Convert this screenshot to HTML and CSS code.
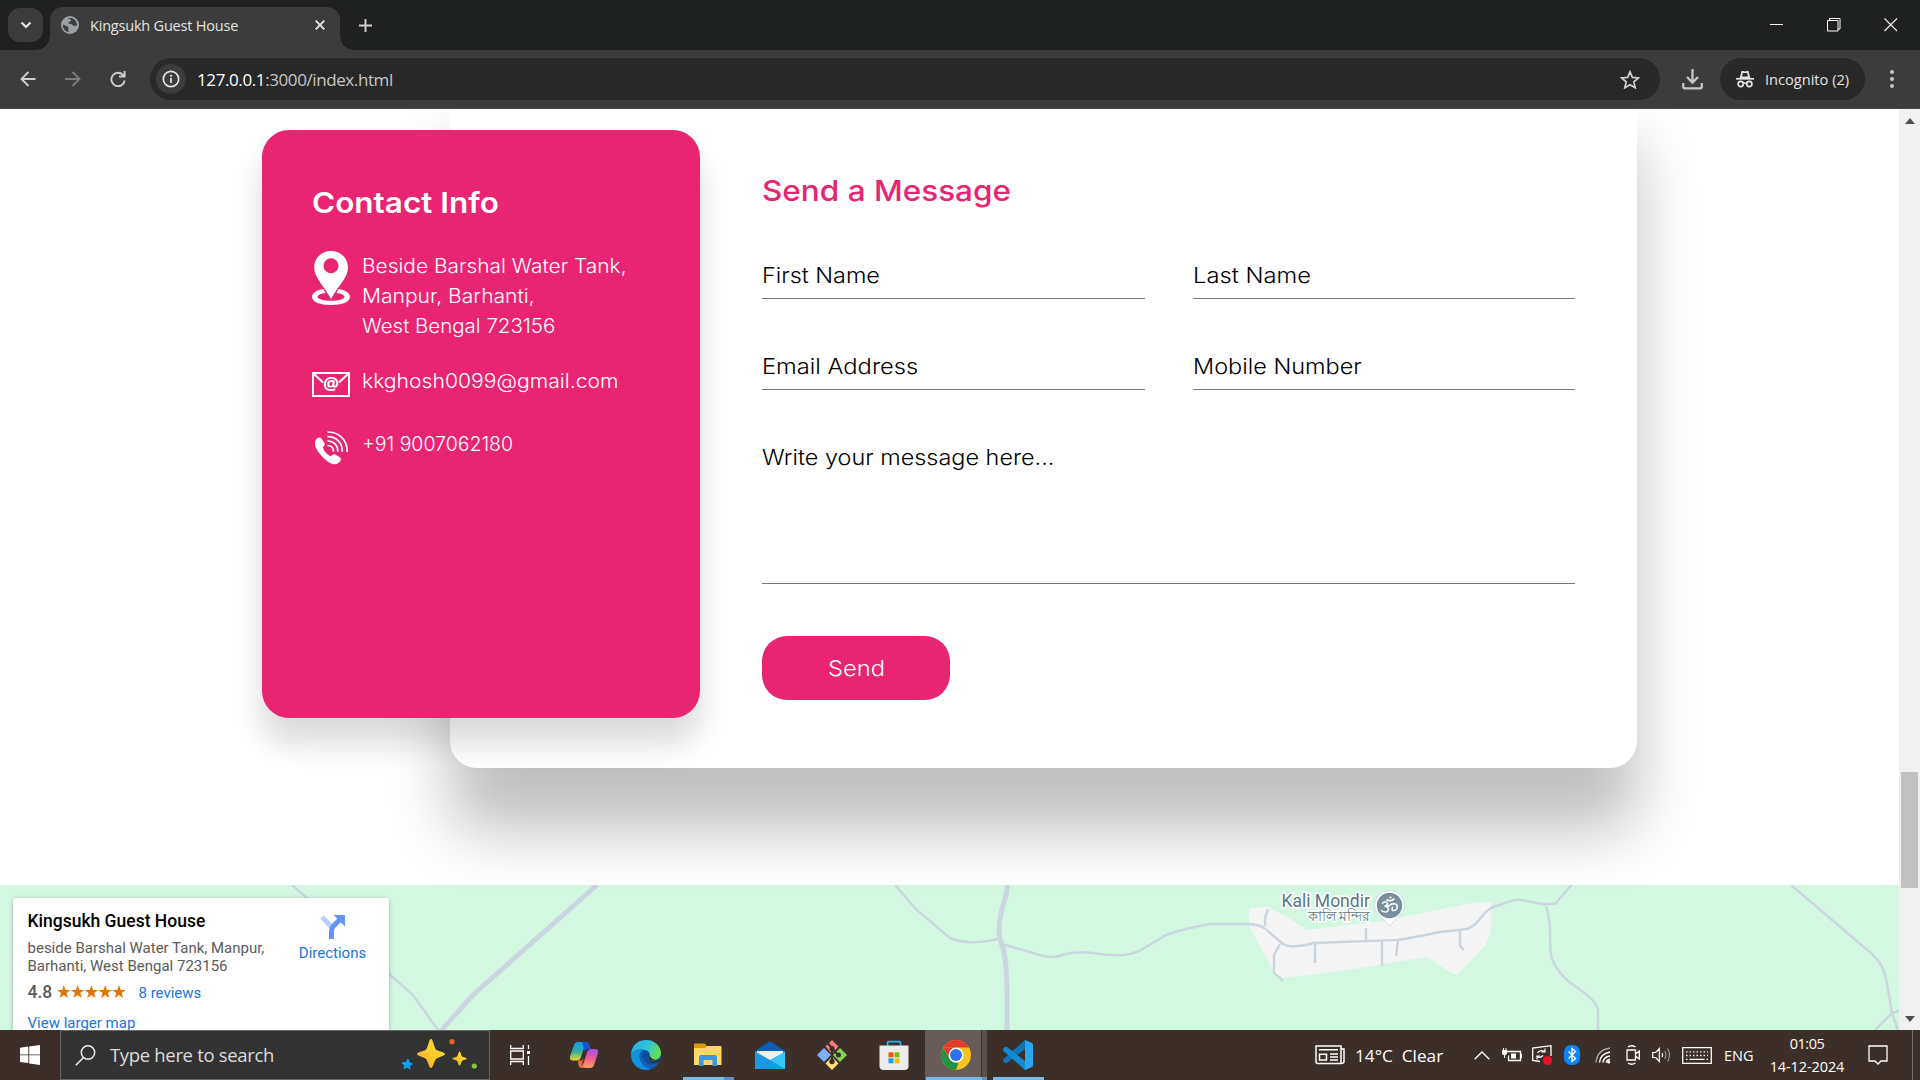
FILE: index.html
```html
<!DOCTYPE html>
<html lang="en">
<head>
<meta charset="utf-8">
<title>Kingsukh Guest House</title>
<link rel="stylesheet" href="styles.css">
</head>
<body>
<header class="tabstrip">
  <div class="tab-search"><svg width="12" height="8" viewBox="0 0 12 8"><path d="M1.5 1.5 6 6l4.500-4.500" fill="none" stroke="#e8e8e8" stroke-width="2.200"/></svg></div>
  <div class="tab">
    <svg class="globe" width="18" height="18" viewBox="0 0 18 18"><circle cx="9" cy="9" r="9" fill="#9aa0a6"/><path d="M2 8.500c2 1.500 4 1 5 2.500s-.5 2.500 1 5C4 15.500 1.500 12.500 2 8.500zM7 2.500c1 1.500 2.500 0 3 1.500S8 5.500 7.500 7s3 .5 4 2 3.500 1 4.500 0c0-3-2.500-6.500-6-7z" fill="#3c3c3c"/></svg>
    <span class="tab-title">Kingsukh Guest House</span>
    <svg class="tab-close" width="10" height="10" viewBox="0 0 10 10"><path d="M.7.7l8.600 8.600M9.300.7.7 9.300" stroke="#e8e8e8" stroke-width="1.900"/></svg>
  </div>
  <svg class="new-tab" width="13" height="13" viewBox="0 0 13 13"><path d="M6.500 0v13M0 6.500h13" stroke="#d0d0d0" stroke-width="1.900"/></svg>
  <div class="window-buttons">
    <svg width="14" height="14" viewBox="0 0 14 14"><path d="M0 6.500h13" stroke="#fff"/></svg>
    <svg width="14" height="14" viewBox="0 0 14 14"><path d="M.5 2.500h10.500v10.500H.5zM2.500 2.500v-2h10.500v10.500h-2" fill="none" stroke="#fff"/></svg>
    <svg width="14" height="14" viewBox="0 0 14 14"><path d="M.5.5l12.500 12.500M13 .5.5 13" stroke="#e8e8e8" stroke-width="1.200"/></svg>
  </div>
</header>
<nav class="toolbar">
  <svg class="nav-back" width="16" height="16" viewBox="0 0 16 16"><path d="M15.500 8H2M8.500 1 1.500 8l7 7" fill="none" stroke="#cfcfcf" stroke-width="1.900"/></svg>
  <svg class="nav-forward" width="16" height="16" viewBox="0 0 16 16"><path d="M0 8h14M7.500 1l7 7-7 7" fill="none" stroke="#7c7c7c" stroke-width="1.900"/></svg>
  <svg class="nav-reload" width="16" height="16" viewBox="0 0 16 16"><path d="M13.500 4.500A6.700 6.700 0 1 0 14.700 9.500M14.600 0v5.500H9" fill="none" stroke="#cfcfcf" stroke-width="1.900"/></svg>
  <div class="omnibox">
    <span class="site-info"><svg width="18" height="18" viewBox="0 0 18 18"><circle cx="9" cy="9" r="7.700" fill="none" stroke="#e3e3e3" stroke-width="1.700"/><path d="M9 8v5M9 4.800v1.900" stroke="#e3e3e3" stroke-width="1.800"/></svg></span>
    <span class="url">127.0.0.1<span class="url-rest">:3000/index.html</span></span>
    <svg class="bookmark" width="20" height="19" viewBox="0 0 20 19"><path d="M10 1.800l2.400 5.600 6 .5-4.600 4 1.400 5.900L10 14.700l-5.200 3.100 1.400-5.900-4.600-4 6-.5z" fill="none" stroke="#cfcfcf" stroke-width="1.700"/></svg>
  </div>
  <svg class="download" width="21" height="21" viewBox="0 0 21 21"><path d="M10.500 0v13M5 8l5.500 5.500L16 8M1.200 14v3.500q0 1.800 1.800 1.800h15q1.800 0 1.800-1.800V14" fill="none" stroke="#c7c7c7" stroke-width="2.300"/></svg>
  <div class="incognito">
    <svg width="18" height="18" viewBox="0 0 18 18"><path d="M3.700 8 5.500 1h2l1.500.6L10.500 1h2l1.800 7z" fill="#e3e3e3"/><path d="M6.800 3h4.400l.8 3.500H6z" fill="#282828"/><path d="M0 8.800h18" stroke="#e3e3e3" stroke-width="1.700"/><g fill="none" stroke="#e3e3e3" stroke-width="1.700"><circle cx="4.700" cy="14" r="2.600"/><circle cx="13.300" cy="14" r="2.600"/><path d="M7.300 13.500q1.700-1 3.400 0"/></g></svg>
    <span class="incognito-label">Incognito (2)</span>
  </div>
  <svg class="menu-dots" width="4" height="18" viewBox="0 0 4 18" fill="#c7c7c7"><circle cx="2" cy="2" r="2"/><circle cx="2" cy="9" r="2"/><circle cx="2" cy="16" r="2"/></svg>
</nav>

<div class="viewport">
  <main class="page">
    <section class="contact">
      <aside class="info">
        <h2><span class="wide t-info">Contact Info</span></h2>
        <div class="info-row">
          <svg width="38" height="54" viewBox="0 0 38 54"><path fill-rule="evenodd" fill="#fff" d="M19 0C9.500 0 2.200 7 2.200 16.500 2.200 27 13 36 19 48 25 36 36 27 36 16.500 36 7 28.500 0 19 0zm0 7.300a7.500 7.500 0 1 1 0 15 7.500 7.500 0 0 1 0-15z"/><path fill-rule="evenodd" fill="#fff" d="M11.500 38C4.500 39 0 42 0 46c0 5 8 8 19 8s19-3 19-8c0-4-4.500-7-11.500-8l-2 4c5 .5 8 2 8 3.800 0 2.500-6 4-13.500 4s-13.500-1.500-13.500-4c0-1.800 3-3.300 8-3.800z"/></svg>
          <p><span class="wide t-a1">Beside Barshal Water Tank,</span><span class="wide t-a2">Manpur, Barhanti,</span><span class="wide t-a3">West Bengal 723156</span></p>
        </div>
        <div class="info-row">
          <svg width="38" height="38" viewBox="0 0 38 38"><path d="M1 7h36v23H1z" fill="none" stroke="#fff" stroke-width="1.900"/><path d="M1 7l10 9.500M37 7l-10 9.500" stroke="#fff" stroke-width="2"/><text x="19" y="24" text-anchor="middle" class="at-sign">@</text></svg>
          <p><span class="wide t-mail">kkghosh0099@gmail.com</span></p>
        </div>
        <div class="info-row">
          <svg width="38" height="38" viewBox="0 0 38 38"><path fill="#fff" d="M4 10.500C6 8 8.300 7.800 9.500 9.500l3 4.500c1 1.700-.8 3.200-1.800 4.500 1.500 4.500 5 7.500 8 8.800 1.300-1.200 2.800-2.600 4.500-1.800l5 3c1.700 1.300.5 3.700-2.200 5.700-3 2.300-8.500.8-14-4.700C6 23.500.5 16 4 10.500z"/><g fill="none" stroke="#fff" stroke-width="1.700"><path d="M15.500 3c12 0 20 8.500 19.700 20"/><path d="M15.500 7.700c9 0 15 6.300 14.700 15"/><path d="M15.500 12c6.500 0 10.500 4.500 10.300 10.800"/><path d="M15.500 16.500c4 0 6 2.500 6 6.200"/></g></svg>
          <p>+91 9007062180</p>
        </div>
      </aside>
      <form class="message">
        <h2><span class="wide t-head">Send a Message</span></h2>
        <div class="fields">
          <div class="field"><span class="wide t-fn">First Name</span></div>
          <div class="field"><span class="wide t-ln">Last Name</span></div>
          <div class="field"><span class="wide t-em">Email Address</span></div>
          <div class="field"><span class="wide t-mn">Mobile Number</span></div>
          <div class="field field-area"><span class="wide t-wm">Write your message here...</span></div>
        </div>
        <button type="button" class="send"><span class="wide t-send">Send</span></button>
      </form>
    </section>
    <section class="map">
      <svg class="map-canvas" width="1899" height="145" viewBox="0 885 1899 145">
        <path fill="#f5f5f5" d="M1249 908l19-1 16 8 23 15 77-9 87-18 20-1v30l-6 14-27 28h-5l-26-17-79 13-65 8-9-6-25-46z"/>
        <g class="roads">
          <path d="M292 885l15 13 82 76 24 21 25 35M895 885l22 25 33 28q18 8 48 1M1002 944l38 11q13 4 22 0 13-4 30-2 22 3 32 2 11-1 22-8l20-12q20-7 44-11h37q15 0 22 8l14 12q8 5 31-1l83-3q20-3 43-8l27-3q8-3 13-10 9-13 20-14 14-6 22-5l20 4h13l18-21M1546 906q4 15 4 25 0 22 2 28 6 15 20 25 26 17 26 27v19M1791 885l81 69q11 10 14 24l6 35 6 17M1899 1011l-7 2-17 17"/>
          <path d="M1268 909l-3 9v8M1280 944l-6 11v18l9 8M1315 944v19M1366 928v13M1382 941v25M1398 941l-2 15M1460 931v15l4 4"/>
          <path class="road-main" d="M597 885L473 995l-34 38M1007 885v7q-8 25-8 38 0 8 4 18 4 15 4 47v40"/>
        </g>
        <g class="poi"><text class="poi-name" x="1281.500" y="907">Kali Mondir</text><text class="poi-local" x="1308" y="921">কালি মন্দির</text>
        <path d="M1389.500 890.500a15 15 0 0 0-15 15c0 9 9 12 15 21 6-9 15-12 15-21a15 15 0 0 0-15-15z" fill="#fff" stroke="#b8c9c6" stroke-width=".6"/><circle cx="1389.500" cy="905.500" r="12.700" fill="#78909c"/><g fill="none" stroke="#fff" stroke-width="1.600"><path d="M1382 903.500q4-3.500 5.500 0 0 2.500-3 2.700 4 0 4 3.500-1.500 4.300-7.500.7M1388 906.500q5-5 9-1.500 1 6-4 5.500-2-1.500 0-3.500M1386.500 899.500q4 3 8-1"/></g><circle cx="1390.500" cy="897.500" r="1.100" fill="#fff"/></g>
      </svg>
      <article class="place">
        <div class="place-text">
          <h3>Kingsukh Guest House</h3>
          <p>beside Barshal Water Tank, Manpur,<br>Barhanti, West Bengal 723156</p>
          <div class="rating"><b>4.8</b><svg width="69" height="14" viewBox="0 0 69 14" fill="#e37400"><path id="star" d="M6.800 0l1.700 5h5l-4 3.100 1.500 5-4.200-3-4.200 3 1.500-5L0 5h5.200z"/><use href="#star" x="13.800"/><use href="#star" x="27.600"/><use href="#star" x="41.400"/><use href="#star" x="55.200"/></svg><a class="reviews">8 reviews</a></div>
          <a class="larger">View larger map</a>
        </div>
        <div class="directions">
          <svg width="26" height="24" viewBox="0 0 26 24"><path d="M2 2l9.500 10" stroke="#b9d0fb" stroke-width="5"/><path d="M11.500 24v-8q0-3 2-5l6-6" fill="none" stroke="#6694f5" stroke-width="5"/><path d="M13.500 0H25v11.500z" fill="#6694f5"/></svg>
          <a>Directions</a>
        </div>
      </article>
    </section>
  </main>
  <div class="scrollbar">
    <svg width="10" height="6" viewBox="0 0 10 6"><path d="M0 6l5-6 5 6z" fill="#505050"/></svg>
    <div class="thumb"></div>
    <svg width="10" height="6" viewBox="0 0 10 6"><path d="M0 0l5 6 5-6z" fill="#505050"/></svg>
  </div>
</div>

<footer class="taskbar">
  <div class="start"><svg width="20" height="20" viewBox="0 0 20 20" fill="#fff"><path d="M0 2.800l8.300-1.200v7.800H0zM9.200 1.400 20 0v9.400H9.200zM0 10.300h8.300V18L0 16.900zM9.200 10.300H20V20L9.200 18.400z"/></svg></div>
  <div class="search">
    <svg width="21" height="21" viewBox="0 0 21 21"><circle cx="13" cy="7.500" r="6.700" fill="none" stroke="#eee" stroke-width="1.500"/><path d="M8.500 12.500.8 20.300" stroke="#eee" stroke-width="1.500"/></svg>
    <span class="search-text">Type here to search</span>
    <svg class="sparkles" width="76" height="32" viewBox="0 0 76 32"><defs><linearGradient id="gold" x1="1" y1="0" x2="0" y2="1"><stop offset="0" stop-color="#ffdc3a"/><stop offset=".5" stop-color="#fccb2e"/><stop offset="1" stop-color="#f3a11c"/></linearGradient></defs><path d="M30 0c2 0 3 8.500 5 10.500S44 13 44 15s-7 3-9 5-3 9-5 9-3-7-5-9-9-3-9-5 7-2.500 9-4.500S28 0 30 0z" fill="url(#gold)"/><path d="M58.600 12.500c1.200 0 1.500 4 2.500 5s4.700 1.200 4.700 2.200-3.700 1.200-4.700 2.200-1.300 4.600-2.500 4.600-1.500-3.600-2.500-4.600-4.700-1.200-4.700-2.200 3.700-1.200 4.700-2.200 1.300-5 2.500-5z" fill="url(#gold)"/><path d="M7 20l1.500 3.500 3 1.500-3 1.500L9 30l-3-2-3 1.500.5-3.500L1 24l4-.5z" fill="#0aa5ee" stroke="#0aa5ee"/><circle cx="51" cy="2.700" r="2.600" fill="#f0601f"/><circle cx="73.300" cy="27" r="2.600" fill="#8ac53f"/></svg>
  </div>
  <div class="apps">
    <div class="app"><svg width="20" height="20" viewBox="0 0 20 20" fill="none" stroke="#fff" stroke-width="1.300"><path d="M.7 0v3.500h12.600V0M.7 20v-3.500h12.600V20M.7 6h12.600v8H.7zM18.500 0v4M18.500 11v9"/><path d="M17 6h3v3h-3z" fill="#fff" stroke="none"/></svg></div>
    <div class="app"><svg width="28" height="26" viewBox="0 0 28 26"><defs><linearGradient id="cpa" x1="0" y1="0" x2="0" y2="1"><stop offset="0" stop-color="#169cf0"/><stop offset=".5" stop-color="#27b1a6"/><stop offset="1" stop-color="#f2d31d"/></linearGradient><linearGradient id="cpb" x1="0" y1="0" x2="0" y2="1"><stop offset="0" stop-color="#a14ee8"/><stop offset=".5" stop-color="#ed5b91"/><stop offset="1" stop-color="#fba35a"/></linearGradient></defs><path d="M8 0h8l-5 15q-1 3.500-4 3.500H3q-4 0-3-4L4 3q1-3 4-3z" fill="url(#cpa)"/><path d="M9 0h7q2.500 0 3.500 3l1.300 4H18q-2.500 0-3.500 2.500L12 0z" fill="#1455d4"/><path d="M20 26h-8l5-15.500Q18 7 21 7h4q4 0 3 4l-4 12q-1 3-4 3z" fill="url(#cpb)"/><path d="M8 18.500h3q2 0 3-3L12.500 20q-1 6 5 6H12q-3 0-3.500-3z" fill="#ee6743"/></svg></div>
    <div class="app"><svg width="30" height="30" viewBox="0 0 30 30"><defs><linearGradient id="eda" x1="0" y1="0" x2="1" y2=".4"><stop offset="0" stop-color="#2aa7e8"/><stop offset=".6" stop-color="#30c5d2"/><stop offset="1" stop-color="#63df57"/></linearGradient></defs><circle cx="15" cy="15" r="15" fill="#0b62b8"/><path d="M0 14C1 5 7 0 15 0c9 0 15 6.500 15 13 0 5-3.500 7.500-8 7.500-5 0-5.500-2-4-4 1.500-2.500 0-6-5-6.500C8 9.500 3 10 0 14z" fill="url(#eda)"/><path d="M0 15c2-5 8-7 13-5.500-4 1.500-6 6-4 10.500s6 9 11 9A15 15 0 0 1 0 15z" fill="#1390dc"/><path d="M13 10c-3 4-2 12 5 14 5 1.500 9-.5 11-2.500l1-4c-5 3.500-12 4-12.500 1-.3-1 1.500-2 1-4.500-.5-2.500-3-4-5.500-4z" fill="#0d4e9c"/><path d="M30 16c-5 5-12.500 5.500-12.500 2.500 0-1 1.500-2 1-4.500 0 5 7 8 11.500 2z" fill="#3c2e28"/><path d="M28.500 21.500c-4 2-9 1.500-11-2.500 2 3 8.500 2.500 12-1z" fill="#3c2e28"/></svg></div>
    <div class="app running grouped"><svg width="28" height="24" viewBox="0 0 28 24"><path d="M0 1.500Q0 .5 1 .5h10l2 3v3H0z" fill="#dc9a09"/><path d="M0 5h11l2-2h13.500q1 0 1 1v18H0z" fill="#ffd766"/><path d="M5 14q0-2 2-2h14q2 0 2 2v9h-4.500v-6h-9v6H5z" fill="#3a96dd"/></svg></div>
    <div class="app"><svg width="30" height="28" viewBox="0 0 30 28"><path d="M0 10 15 0l15 10v3H0z" fill="#0a5fb4"/><path d="M2 10h26v3L15 22 2 13z" fill="#f0f0f0"/><path d="M0 10.500 15 19l15-8.500V28H0z" fill="#38c4f4"/><path d="M0 10.500 30 28H0z" fill="#1c97e0"/></svg></div>
    <div class="app"><svg width="30" height="30" viewBox="0 0 30 30"><path d="M15 0l6.500 6.500L15 14 8.500 6.500z" fill="#f77b7b"/><path d="M7 8l7 7-7 7-7-7z" fill="#7fb0ff"/><path d="M23 8l7 7-7 7-7-7z" fill="#84d45c"/><path d="M15 16.500l6.500 7L15 30l-6.500-6.500z" fill="#ffe07a"/><g stroke="#3c2e28" stroke-width="2" fill="#3c2e28"><path d="M11 3.500l4 4.500v13M15 8l6 7" fill="none"/><circle cx="15" cy="8.500" r="1.500"/><circle cx="15" cy="21.500" r="1.700"/><circle cx="21.500" cy="15" r="1.500"/></g></svg></div>
    <div class="app"><svg width="30" height="30" viewBox="0 0 30 30"><path d="M8.500 8V3q0-1.300 1.300-1.300h10.400q1.300 0 1.300 1.300v5" fill="none" stroke="#27b1ea" stroke-width="1.800"/><path d="M.5 5.500h29V26q0 4-4 4h-21q-4 0-4-4z" fill="#ececec"/><path d="M9.500 12.300h5v5h-5z" fill="#f1511b"/><path d="M15.500 12.300h5v5h-5z" fill="#80bb03"/><path d="M9.500 18.300h5v5h-5z" fill="#04a5ee"/><path d="M15.500 18.300h5v5h-5z" fill="#fdb905"/></svg></div>
    <div class="app running grouped active"><svg width="30" height="30" viewBox="0 0 30 30"><circle cx="15" cy="15" r="15" fill="#fcc31e"/><path d="M2 7.500A15 15 0 0 1 28 7.500H15z" fill="#e33b2e"/><path d="M2 7.500l6.500 11.300L15 7.500z" fill="#e33b2e"/><path d="M2 7.500l6.500 11.300 4 3.500 5 .5L15 30A15 15 0 0 1 2 7.500z" fill="#229342"/><circle cx="15" cy="15" r="7.500" fill="#fff"/><circle cx="15" cy="15" r="6" fill="#2b74e8"/></svg></div>
    <div class="app running"><svg width="30" height="30" viewBox="0 0 30 30"><path d="M22 0v9L4 23q-1 .5-2 0l-2-2q-.5-1 0-1.700z" fill="#0b73b8"/><path d="M0 9l2-2q1-.5 2 0l18 14v9L0 10.500z" fill="#138bd2"/><path d="M22 0l7 3q1 .5 1 1.500v21q0 1-1 1.500l-7 3z" fill="#2aa6f2"/></svg></div>
  </div>
  <div class="tray">
    <svg width="30" height="20" viewBox="0 0 30 20" fill="none" stroke="#fff" stroke-width="1.500"><path d="M1 1h25v17.500H3q-2 0-2-2zM26 4h3v12.500q0 2-3 2M4 4.800h19M15 9h8M15 12h8M15 15h8M4.500 9.200h7v5.800h-7z"/></svg>
    <span class="weather">14°C&nbsp; Clear</span>
    <svg class="g1" width="16" height="9" viewBox="0 0 16 9"><path d="M.7 8.300 8 1l7.300 7.300" fill="none" stroke="#fff" stroke-width="1.300"/></svg>
    <svg class="g2" width="20" height="14" viewBox="0 0 20 14"><path d="M5 3.500h13.500v9H6.500v-5" fill="none" stroke="#fff" stroke-width="1.300"/><path d="M9 5.500h5v5H9zM19 6h1v4h-1zM0 2h5v3.500L4 7H1L0 5.500zM1 0h1v2H1zM3.500 0h1v2h-1zM2 6h1v4H2z" fill="#fff"/></svg>
    <svg class="g3" width="20" height="20" viewBox="0 0 20 20"><path d="M8 16.500.7 15.500V3L19 .7V11" fill="none" stroke="#fff" stroke-width="1.300"/><path d="M5.500 8q2.500-4 7-1.500M13 3.500V7H9.500M11 10.500q-3 3-5.500 1.200M5 14.500V11h3" fill="none" stroke="#fff" stroke-width="1.200"/><circle cx="15.500" cy="15.500" r="4.500" fill="#e81123"/></svg>
    <svg class="g4" width="16" height="20" viewBox="0 0 16 20"><rect width="16" height="20" rx="7" fill="#0a84ff"/><path d="M4.500 6.500l7 7L8 16.500v-13l3.500 3-7 7" fill="none" stroke="#fff" stroke-width="1.300"/></svg>
    <svg class="g5" width="16" height="17" viewBox="0 0 16 17" fill="none"><g stroke="#aaa" stroke-width="1.300"><path d="M1 15.500Q2 3 15 1"/></g><g stroke="#fff" stroke-width="1.300"><path d="M4.500 15.500Q5 7 15 5M8 15.500Q8.500 10 15 9M11 15.500q1-3 4-3"/></g><circle cx="13.700" cy="15" r="1.600" fill="#fff"/></svg>
    <svg class="g6" width="14" height="20" viewBox="0 0 14 20" fill="none" stroke="#fff" stroke-width="1.300"><path d="M1 5h8.500v10H1zM10 8.500 13.300 6v8L10 11.500M2 2Q5.500-.5 9.500 2M2 18q3.500 2.500 7.500 0"/></svg>
    <svg class="g7" width="20" height="16" viewBox="0 0 20 16" fill="none" stroke="#fff" stroke-width="1.200"><path d="M.7 5.500h3L7.300 1.500v13L3.700 10.500h-3zM10 6q1.200 2 0 4"/><path d="M12.700 4q2.500 4 0 8M15.500 1.500q4 6.500 0 13" stroke="#999"/></svg>
    <svg class="g8" width="30" height="17" viewBox="0 0 30 17" fill="none" stroke="#fff" stroke-width="1.300"><path d="M.7.700h28.600v15.600H.7z"/><path d="M4 4.800h22M4 8.500h22" stroke-dasharray="1.500 2"/><path d="M4 12.300h1.500M7.500 12.300h15M24.500 12.300H26"/></svg>
    <span class="lang">ENG</span>
    <div class="clock"><span class="time">01:05</span><span class="date">14-12-2024</span></div>
    <svg class="action-center" width="20" height="20" viewBox="0 0 20 20"><path d="M1 1H19V16H13L10 19L7 16H1Z" fill="none" stroke="#fff" stroke-width="1.300"/></svg>
    <div class="show-desktop"></div>
  </div>
</footer>
</body>
</html>
```
FILE: styles.css
```css
* { box-sizing: border-box; }
body { margin: 0; width: 1920px; height: 1080px; overflow: hidden; display: flex; flex-direction: column; background: #fff; font-family: "Open Sans", "Noto Sans", sans-serif; }
svg { display: block; flex: none; }
h2, h3, p { margin: 0; }

.tabstrip { height: 50px; background: #1f2120; display: flex; align-items: flex-start; }
.tab-search { position: relative; z-index: 1; width: 35px; height: 34px; margin: 8px 7px 0 8px; border-radius: 12px; background: #3c3c3c; display: flex; align-items: center; justify-content: center; }
.tab { position: relative; width: 290px; height: 43px; margin-top: 7px; border-radius: 13px 13px 0 0; background: #3c3c3c; display: flex; align-items: center; padding: 0 15px 7px 11px; }
.tab::before, .tab::after { content: ""; position: absolute; bottom: 0; width: 14px; height: 14px; }
.tab::before { left: -14px; background: radial-gradient(circle at 0 0, #1f2120 13.500px, #3c3c3c 14px); }
.tab::after { right: -14px; background: radial-gradient(circle at 100% 0, #1f2120 13.500px, #3c3c3c 14px); }
.tab-title { flex: 1; font-size: 14.500px; letter-spacing: -.2px; color: #e3e3e3; white-space: nowrap; margin-left: 11px; }
.new-tab { margin: 19px 0 0 19px; }
.window-buttons { margin: 18px 22px 0 auto; display: flex; gap: 43px; }

.toolbar { height: 59px; background: #3c3c3c; border-bottom: 1px solid #4a4748; display: flex; align-items: center; padding-left: 20px; }
.nav-forward { margin-left: 29px; }
.nav-reload { margin-left: 29px; }
.omnibox { width: 1510px; height: 42px; margin-left: 24px; border-radius: 21px; background: #282828; display: flex; align-items: center; padding: 0 20px 0 6px; }
.site-info { width: 30px; height: 30px; border-radius: 50%; background: #3c3c3c; display: flex; align-items: center; justify-content: center; }
.url { font-size: 17px; letter-spacing: -.4px; color: #fff; margin-left: 11px; white-space: nowrap; }
.url-rest { color: #c7c7c7; }
.bookmark { margin-left: auto; }
.download { margin-left: 22px; }
.incognito { width: 145px; height: 42px; margin-left: 17px; border-radius: 21px; background: #282828; display: flex; align-items: center; padding-left: 16px; }
.incognito-label { margin-left: 11px; padding-bottom: 1px; font-size: 14.600px; color: #e3e3e3; white-space: nowrap; }
.menu-dots { margin-left: 25px; }

.viewport { height: 921px; overflow: hidden; display: flex; }
.page { width: 1899px; overflow: hidden; }
.contact { position: relative; z-index: 1; height: 776px; display: flex; align-items: flex-start; padding-left: 262px; font-family: Inter, sans-serif; }
.wide { display: block; width: max-content; transform-origin: 0 50%; }
.info { position: relative; z-index: 1; width: 438px; height: 588px; margin-top: 21px; padding: 50px; border-radius: 27px; background: #e92473; color: #fff; box-shadow: 0 25px 31px rgba(0,0,0,.15); }
.info h2 { font-size: 29px; line-height: 45px; font-weight: 600; margin-bottom: 26px; }
.info-row { display: flex; gap: 12px; min-height: 38px; margin-bottom: 25px; align-items: flex-start; }
.info p { font-size: 19.500px; line-height: 30px; font-weight: 300; white-space: nowrap; }
.at-sign { font: 700 18px "Open Sans", sans-serif; fill: #fff; }
.t-info { transform: scaleX(1.085); }
.t-a1 { transform: scaleX(1.072); }
.t-a2 { transform: scaleX(1.080); }
.t-a3 { transform: scaleX(1.050); }
.t-mail { transform: scaleX(1.084); }
.message { width: 1187px; height: 688px; margin: -29px 0 0 -250px; padding: 88px 62px 0 312px; border-radius: 27px; background: #fff; box-shadow: 0 62px 62px rgba(0,0,0,.25); }
.message h2 { font-size: 29px; line-height: 45px; font-weight: 500; color: #e92473; margin-bottom: 45px; }
.t-head { transform: scaleX(1.086); }
.fields { display: grid; grid-template-columns: 1fr 1fr; gap: 50px 48px; }
.field { height: 41px; border-bottom: 1px solid #767676; font-size: 22px; line-height: 34px; font-weight: 300; color: #000; white-space: nowrap; }
.t-fn { transform: scaleX(1.064); }
.t-ln { transform: scaleX(1.078); }
.t-em { transform: scaleX(1.077); }
.t-mn { transform: scaleX(1.068); }
.t-wm { transform: scaleX(1.065); }
.t-send { margin: 0 auto; transform-origin: 50% 50%; transform: scaleX(1.080); }
.field-area { grid-column: span 2; height: 144px; }
.send { display: block; width: 188px; height: 64px; margin-top: 52px; border: 0; border-radius: 25px; background: #e92473; color: #fff; font: 300 22px Inter, sans-serif; }

.map { display: grid; height: 145px; background: #d3f8e2; font-family: Roboto, sans-serif; }
.map-canvas, .place { grid-area: 1 / 1; }
.roads { fill: none; stroke: #cbd5e0; stroke-width: 2.500; }
.road-main { stroke-width: 5; }
.poi text { fill: #5b7582; stroke: #fff; stroke-width: 3px; paint-order: stroke; }
.poi-name { font-size: 17.500px; }
.poi-local { font-size: 13.500px; }
.place { width: 376px; height: 160px; margin: 13px 0 0 13px; background: #fff; border-radius: 2px; box-shadow: 0 1px 4px rgba(0,0,0,.3); padding: 12px 0 0 14.500px; display: flex; font-size: 15px; line-height: 18px; white-space: nowrap; }
.place-text { width: 249px; }
.place h3 { font-size: 17.500px; line-height: 22px; font-weight: 500; color: #000; margin-bottom: 7px; }
.place p { color: #5b5b5b; }
.place a { color: #1a73e8; }
.rating { display: flex; align-items: center; height: 20px; margin-top: 7px; }
.rating b { font-size: 17.500px; font-weight: 500; color: #5b5b5b; width: 29px; }
.reviews { margin-left: 13px; padding-top: 2px; }
.larger { display: inline-block; margin-top: 12px; }
.directions { width: 112px; display: flex; flex-direction: column; align-items: center; gap: 5px; padding-top: 5px; }
.scrollbar { width: 21px; background: #f1f1f1; display: flex; flex-direction: column; align-items: center; padding: 9px 0 8px; }
.thumb { width: 17px; height: 116px; background: #c1c1c1; margin: 648px 0 auto; }

.taskbar { height: 50px; background: #3c2e28; display: flex; color: #fff; }
.start { width: 60px; display: flex; align-items: center; justify-content: center; }
.search { width: 430px; border: 1px solid #666; background: #333; display: flex; align-items: center; padding: 0 12px 0 14px; }
.search-text { margin-left: 14px; padding-bottom: 1px; font-size: 18.500px; letter-spacing: -.33px; color: #dcdcdc; white-space: nowrap; }
.sparkles { margin-left: auto; }
.apps { display: flex; }
.app { position: relative; width: 62px; height: 50px; display: flex; align-items: center; justify-content: center; }
.app:first-child { padding-right: 2px; margin-right: 1px; }
.active { background: linear-gradient(90deg, #675c57 56px, #3c332f 56px, #3c332f 57px, #58504b 57px); }
.running::after { content: ""; position: absolute; left: 6px; bottom: 0; width: 51px; height: 3px; background: #76b9ed; }
.grouped::after { background: linear-gradient(90deg, #76b9ed 41px, #5c91bd 41px); }
.active::after { left: 1px; width: 61px; background: linear-gradient(90deg, #76b9ed 56px, #5c91bd 56px); }
.tray { flex: 1; display: flex; align-items: center; padding-left: 266px; white-space: nowrap; }
.weather { flex: none; width: 88px; margin-left: 10px; font-size: 17.200px; }
.g1 { margin-left: 31px; }
.g2 { margin-left: 12px; }
.g3 { margin-left: 10px; }
.g4 { margin-left: 12px; }
.g5 { margin-left: 15px; }
.g6 { margin-left: 15px; }
.g7 { margin-left: 12px; }
.g8 { margin-left: 10px; }
.lang { width: 30px; margin-left: 12px; font-size: 14.500px; }
.clock { width: 76px; margin-left: 15px; font-size: 14.500px; line-height: 23px; display: flex; flex-direction: column; align-items: center; }
.time { letter-spacing: -.5px; }
.date { letter-spacing: -.1px; }
.action-center { margin-left: 23px; }
.show-desktop { flex: none; margin-left: 24px; width: 1px; height: 50px; background: #77706c; }
```
